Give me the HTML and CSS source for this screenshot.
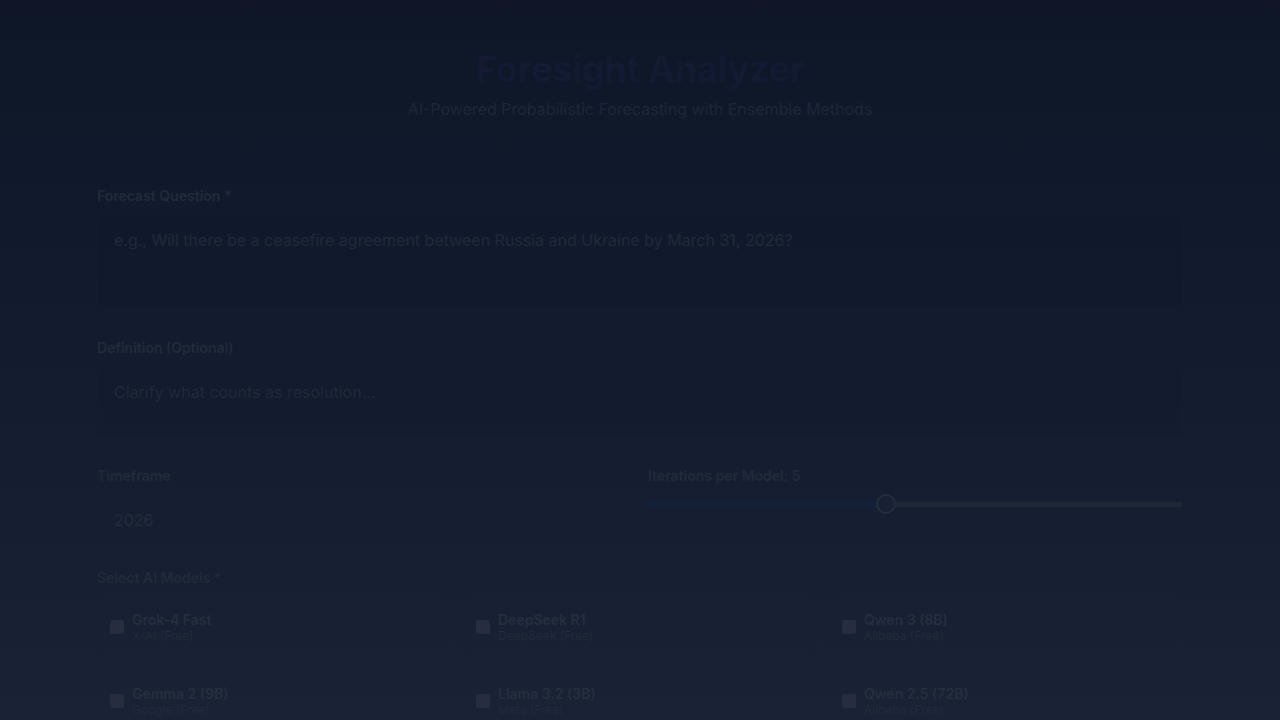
FILE: index.html
```html
<!DOCTYPE html>
<html lang="en">
<head>
<meta charset="utf-8">
<title>Foresight Analyzer</title>
<link rel="stylesheet" href="styles.css">
</head>
<body>
<header class="header">
  <h1 class="title">Foresight Analyzer</h1>
  <p class="subtitle">AI-Powered Probabilistic Forecasting with Ensemble Methods</p>
</header>
<main class="main">
  <div class="group">
    <label class="label">Forecast Question *</label>
    <div class="field field-lg"><span class="placeholder">e.g., Will there be a ceasefire agreement between Russia and Ukraine by March 31, 2026?</span></div>
  </div>
  <div class="group">
    <label class="label">Definition (Optional)</label>
    <div class="field field-md"><span class="placeholder">Clarify what counts as resolution...</span></div>
  </div>
  <div class="row">
    <div class="col">
      <label class="label">Timeframe</label>
      <div class="field field-sm"><span class="value">2026</span></div>
    </div>
    <div class="col">
      <label class="label">Iterations per Model: 5</label>
      <div class="slider">
        <div class="track"><div class="fill" style="width:44.6%"></div></div>
        <div class="thumb" style="left:44.6%"></div>
      </div>
    </div>
  </div>
  <div class="group models">
    <label class="label">Select AI Models *</label>
    <div class="grid">
      <div class="card"><span class="check"></span><div class="info"><div class="name">Grok-4 Fast</div><div class="sub">X-AI (Free)</div></div></div>
      <div class="card"><span class="check"></span><div class="info"><div class="name">DeepSeek R1</div><div class="sub">DeepSeek (Free)</div></div></div>
      <div class="card"><span class="check"></span><div class="info"><div class="name">Qwen 3 (8B)</div><div class="sub">Alibaba (Free)</div></div></div>
      <div class="card"><span class="check"></span><div class="info"><div class="name">Gemma 2 (9B)</div><div class="sub">Google (Free)</div></div></div>
      <div class="card"><span class="check"></span><div class="info"><div class="name">Llama 3.2 (3B)</div><div class="sub">Meta (Free)</div></div></div>
      <div class="card"><span class="check"></span><div class="info"><div class="name">Qwen 2.5 (72B)</div><div class="sub">Alibaba (Free)</div></div></div>
    </div>
  </div>
</main>
</body>
</html>
```
FILE: styles.css
```css
html, body {
  margin: 0;
  padding: 0;
}
body {
  width: 1280px;
  height: 720px;
  overflow: hidden;
  font-family: Inter, "Noto Sans", "Liberation Sans", sans-serif;
  background: linear-gradient(180deg, #0e1628 0%, #111a2c 30%, #141c2f 55%, #171f32 80%, #1a2235 100%);
}
.header {
  padding: 49px 0 25px;
  text-align: center;
}
.title {
  margin: 0;
  font-size: 36px;
  line-height: 40px;
  font-weight: 700;
  color: #131a32;
  letter-spacing: -0.2px;
}
.subtitle {
  margin: 8px 0 0;
  font-size: 16px;
  line-height: 24px;
  color: #1d2638;
}
.main {
  width: 1086px;
  margin: 0 auto;
  padding-top: 40px;
}
.group {
  margin-bottom: 28px;
}
.label {
  display: block;
  font-size: 14px;
  line-height: 20px;
  font-weight: 600;
  color: #222a3a;
  margin-bottom: 8px;
}
.field {
  box-sizing: border-box;
  border: 1px solid rgba(24, 32, 50, 0.45);
  border-radius: 8px;
  background: rgba(16, 22, 38, 0.08);
  padding: 15px 16px;
  font-size: 16px;
  line-height: 20px;
}
.field-lg { height: 96px; }
.field-md { height: 72px; }
.field-sm { height: 52px; border-color: transparent; background: transparent; }
.placeholder { color: #202939; }
.value { color: #242c3c; }
.row {
  display: grid;
  grid-template-columns: 535px 535px;
  gap: 16px;
  margin-bottom: 22px;
}
.slider {
  position: relative;
  height: 20px;
  margin-right: 1px;
}
.track {
  position: absolute;
  left: 0;
  right: 0;
  top: 8px;
  height: 5px;
  border-radius: 3px;
  background: #1f2737;
  overflow: hidden;
}
.fill {
  height: 100%;
  background: #122039;
}
.thumb {
  position: absolute;
  top: 0;
  width: 20px;
  height: 20px;
  margin-left: -10px;
  box-sizing: border-box;
  border-radius: 50%;
  border: 2px solid #252e3e;
  background: #182033;
}
.models .label {
  margin-bottom: 10px;
}
.grid {
  display: grid;
  grid-template-columns: repeat(3, 354px);
  column-gap: 12px;
  row-gap: 16px;
}
.card {
  box-sizing: border-box;
  height: 58px;
  display: flex;
  align-items: center;
  gap: 8px;
  padding: 0 12px;
  border: 1px solid rgba(30, 38, 56, 0.35);
  border-radius: 8px;
  background: rgba(28, 36, 54, 0.1);
}
.check {
  width: 14px;
  height: 14px;
  border-radius: 2px;
  background: #252d3e;
  flex: none;
}
.name {
  font-size: 14px;
  line-height: 17px;
  font-weight: 600;
  color: #262e3e;
}
.sub {
  font-size: 12px;
  line-height: 16px;
  color: #222a3b;
}
```
